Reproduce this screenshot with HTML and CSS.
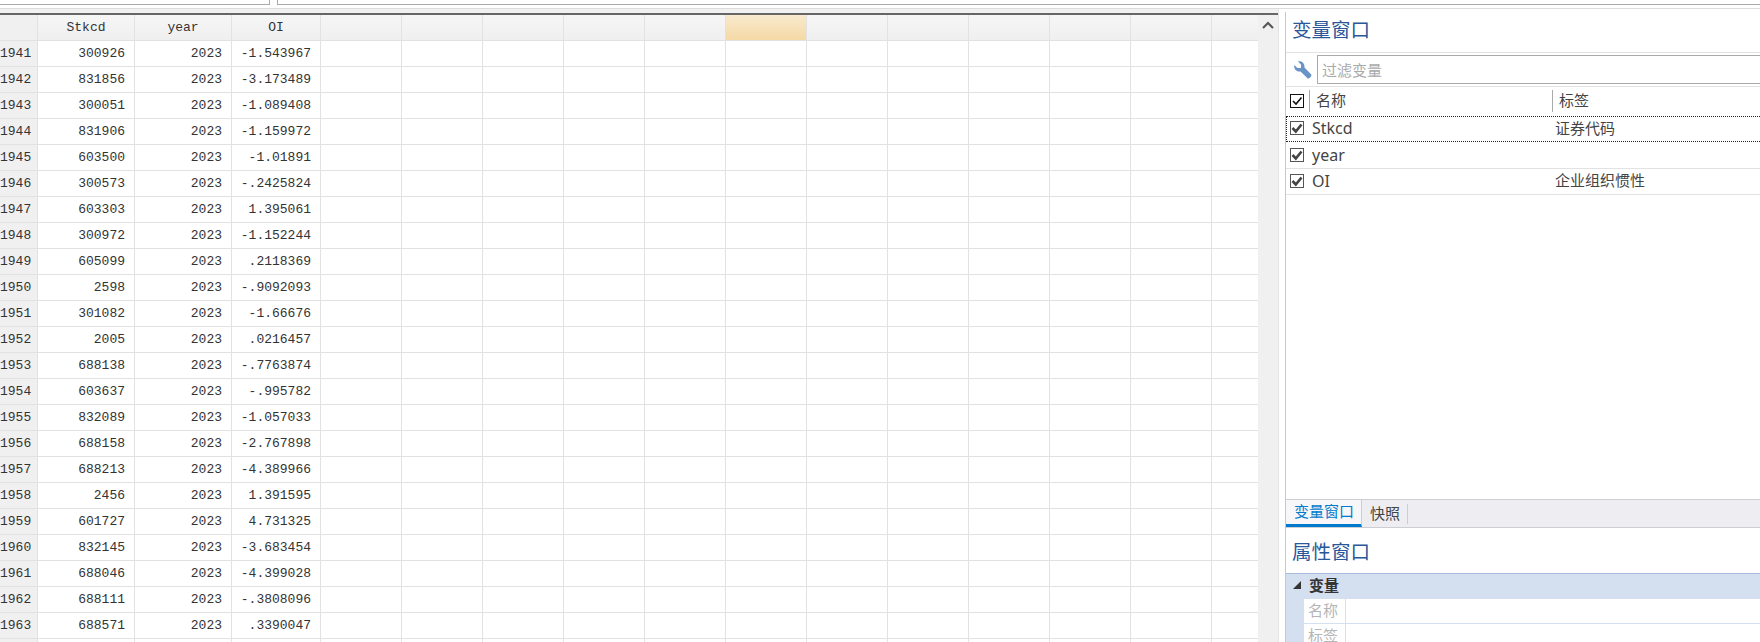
FILE: index.html
```html
<!DOCTYPE html>
<html lang="zh-CN">
<head>
    <meta charset="UTF-8">
    <title>数据编辑器</title>
    <link rel="stylesheet" href="styles.css">
</head>
<body>
    <!-- command strip above the grid -->
    <div class="topbar">
        <div class="box box-left"></div>
        <div class="box box-right"></div>
    </div>

    <div class="main">
        <div class="data-pane">
            <div class="grid-wrap">
                <div class="row head-row">
                    <div class="cell num"></div>
                    <div class="cell stkcd">Stkcd</div>
                    <div class="cell year">year</div>
                    <div class="cell oi">OI</div>
                    <div class="cell blank"></div>
                    <div class="cell blank"></div>
                    <div class="cell blank"></div>
                    <div class="cell blank"></div>
                    <div class="cell blank"></div>
                    <div class="cell blank hot"></div>
                    <div class="cell blank"></div>
                    <div class="cell blank"></div>
                    <div class="cell blank"></div>
                    <div class="cell blank"></div>
                    <div class="cell blank"></div>
                    <div class="cell blank"></div>
                </div>
                <div class="row"><div class="cell num">1941</div><div class="cell stkcd">300926</div><div class="cell year">2023</div><div class="cell oi">-1.543967</div><div class="rest"></div></div>
                <div class="row"><div class="cell num">1942</div><div class="cell stkcd">831856</div><div class="cell year">2023</div><div class="cell oi">-3.173489</div><div class="rest"></div></div>
                <div class="row"><div class="cell num">1943</div><div class="cell stkcd">300051</div><div class="cell year">2023</div><div class="cell oi">-1.089408</div><div class="rest"></div></div>
                <div class="row"><div class="cell num">1944</div><div class="cell stkcd">831906</div><div class="cell year">2023</div><div class="cell oi">-1.159972</div><div class="rest"></div></div>
                <div class="row"><div class="cell num">1945</div><div class="cell stkcd">603500</div><div class="cell year">2023</div><div class="cell oi">-1.01891</div><div class="rest"></div></div>
                <div class="row"><div class="cell num">1946</div><div class="cell stkcd">300573</div><div class="cell year">2023</div><div class="cell oi">-.2425824</div><div class="rest"></div></div>
                <div class="row"><div class="cell num">1947</div><div class="cell stkcd">603303</div><div class="cell year">2023</div><div class="cell oi">1.395061</div><div class="rest"></div></div>
                <div class="row"><div class="cell num">1948</div><div class="cell stkcd">300972</div><div class="cell year">2023</div><div class="cell oi">-1.152244</div><div class="rest"></div></div>
                <div class="row"><div class="cell num">1949</div><div class="cell stkcd">605099</div><div class="cell year">2023</div><div class="cell oi">.2118369</div><div class="rest"></div></div>
                <div class="row"><div class="cell num">1950</div><div class="cell stkcd">2598</div><div class="cell year">2023</div><div class="cell oi">-.9092093</div><div class="rest"></div></div>
                <div class="row"><div class="cell num">1951</div><div class="cell stkcd">301082</div><div class="cell year">2023</div><div class="cell oi">-1.66676</div><div class="rest"></div></div>
                <div class="row"><div class="cell num">1952</div><div class="cell stkcd">2005</div><div class="cell year">2023</div><div class="cell oi">.0216457</div><div class="rest"></div></div>
                <div class="row"><div class="cell num">1953</div><div class="cell stkcd">688138</div><div class="cell year">2023</div><div class="cell oi">-.7763874</div><div class="rest"></div></div>
                <div class="row"><div class="cell num">1954</div><div class="cell stkcd">603637</div><div class="cell year">2023</div><div class="cell oi">-.995782</div><div class="rest"></div></div>
                <div class="row"><div class="cell num">1955</div><div class="cell stkcd">832089</div><div class="cell year">2023</div><div class="cell oi">-1.057033</div><div class="rest"></div></div>
                <div class="row"><div class="cell num">1956</div><div class="cell stkcd">688158</div><div class="cell year">2023</div><div class="cell oi">-2.767898</div><div class="rest"></div></div>
                <div class="row"><div class="cell num">1957</div><div class="cell stkcd">688213</div><div class="cell year">2023</div><div class="cell oi">-4.389966</div><div class="rest"></div></div>
                <div class="row"><div class="cell num">1958</div><div class="cell stkcd">2456</div><div class="cell year">2023</div><div class="cell oi">1.391595</div><div class="rest"></div></div>
                <div class="row"><div class="cell num">1959</div><div class="cell stkcd">601727</div><div class="cell year">2023</div><div class="cell oi">4.731325</div><div class="rest"></div></div>
                <div class="row"><div class="cell num">1960</div><div class="cell stkcd">832145</div><div class="cell year">2023</div><div class="cell oi">-3.683454</div><div class="rest"></div></div>
                <div class="row"><div class="cell num">1961</div><div class="cell stkcd">688046</div><div class="cell year">2023</div><div class="cell oi">-4.399028</div><div class="rest"></div></div>
                <div class="row"><div class="cell num">1962</div><div class="cell stkcd">688111</div><div class="cell year">2023</div><div class="cell oi">-.3808096</div><div class="rest"></div></div>
                <div class="row"><div class="cell num">1963</div><div class="cell stkcd">688571</div><div class="cell year">2023</div><div class="cell oi">.3390047</div><div class="rest"></div></div>
                <div class="row"><div class="cell num"></div><div class="cell stkcd"></div><div class="cell year"></div><div class="cell oi"></div><div class="rest"></div></div>
            </div>
            <div class="scrollbar">
                <svg class="chevron" width="12" height="8" viewBox="0 0 12 8"><path d="M1 7 L6 2 L11 7" fill="none" stroke="#555" stroke-width="2"/></svg>
            </div>
        </div>

        <div class="side">
            <div class="side-title">变量窗口</div>

            <div class="filter-row">
                <svg class="wrench" width="18" height="18" viewBox="0 0 18 18"><path d="M4 0.4 L7 3.4 L7 7 L3.4 7 L0.3 4 C-0.3 7 1.5 10.8 6.5 10.5 L13.5 17.2 C15 18.3 18.3 15 17.2 13.5 L10.5 6.5 C10.8 1.5 7 -0.3 4 0.4 Z" fill="#6a94c6"/></svg>
                <input class="filter-input" type="text" placeholder="过滤变量">
            </div>

            <div class="var-head">
                <span class="check check-head"><svg width="12" height="12" viewBox="0 0 12 12"><path d="M2 6 L5 9 L10.5 2.5" fill="none" stroke="#111" stroke-width="1.6"/></svg></span>
                <span class="var-title name-title">名称</span>
                <span class="var-title">标签</span>
            </div>

            <div class="var-row focused">
                <span class="check"><svg width="12" height="12" viewBox="0 0 12 12"><path d="M1.5 6 L4.8 9.5 L10.5 2.5" fill="none" stroke="#444" stroke-width="2.6"/></svg></span>
                <span class="var-name">Stkcd</span>
                <span class="var-label">证券代码</span>
            </div>
            <div class="var-row">
                <span class="check"><svg width="12" height="12" viewBox="0 0 12 12"><path d="M1.5 6 L4.8 9.5 L10.5 2.5" fill="none" stroke="#444" stroke-width="2.6"/></svg></span>
                <span class="var-name">year</span>
                <span class="var-label"></span>
            </div>
            <div class="var-row">
                <span class="check"><svg width="12" height="12" viewBox="0 0 12 12"><path d="M1.5 6 L4.8 9.5 L10.5 2.5" fill="none" stroke="#444" stroke-width="2.6"/></svg></span>
                <span class="var-name">OI</span>
                <span class="var-label">企业组织惯性</span>
            </div>

            <div class="list-space"></div>

            <div class="tabs">
                <div class="tab active">变量窗口</div>
                <div class="tab">快照</div>
            </div>

            <div class="side-title props-title">属性窗口</div>

            <div class="props">
                <div class="group-head">
                    <svg class="tri" width="8" height="8" viewBox="0 0 8 8"><path d="M8 0 L8 8 L0 8 Z" fill="#333"/></svg>
                    <span>变量</span>
                </div>
                <div class="prop-row"><div class="prop-key">名称</div><div class="prop-val"></div></div>
                <div class="prop-row"><div class="prop-key">标签</div><div class="prop-val"></div></div>
            </div>
        </div>
    </div>
</body>
</html>
```

FILE: styles.css
```css
/* Data editor layout */
html, body {
    margin: 0;
    height: 642px;
    overflow: hidden;
    background: #fff;
}

body {
    display: flex;
    flex-direction: column;
    font-family: "Noto Sans", "Noto Sans CJK SC", sans-serif;
    color: #444;
}

.topbar {
    flex: none;
    height: 8px;
    display: flex;
    gap: 7px;
    border-bottom: 1px solid #dcdcdc;
}

.box {
    height: 4px;
    background: #fff;
    border: 1px solid #aaa;
    border-top: none;
}

.box-left {
    width: 270px;
    margin-left: -2px;
}

.box-right {
    flex: 1;
    margin-right: -2px;
}

.main {
    flex: 1;
    display: flex;
    min-height: 0;
}

/* grid */
.data-pane {
    flex: none;
    width: 1279px;
    display: flex;
    padding-top: 4px;
    background: #f1f1f1;
    border-right: 1px solid #e4e4e4;
    box-sizing: border-box;
}

.grid-wrap {
    flex: none;
    width: 1258px;
    border-top: 2px solid #666;
    overflow: hidden;
    background: #fff;
}

.row {
    display: flex;
    height: 26px;
    font-family: "Liberation Mono", monospace;
    font-size: 13px;
    line-height: 25px;
    color: #333;
    white-space: nowrap;
}

.cell {
    flex: none;
    box-sizing: border-box;
    height: 26px;
    padding-right: 9px;
    text-align: right;
    border-right: 1px solid #e2e2e2;
    border-bottom: 1px solid #e2e2e2;
}

.num {
    width: 38px;
    background: #f0f0f0;
}

.stkcd, .year {
    width: 97px;
}

.oi {
    width: 89px;
}

.blank {
    width: 81px;
}

.rest {
    flex: 1;
    height: 26px;
    box-sizing: border-box;
    border-bottom: 1px solid #e2e2e2;
    background: repeating-linear-gradient(to right, #fff 0 80px, #e2e2e2 80px 81px);
}

.head-row .cell {
    padding-right: 0;
    text-align: center;
    background: linear-gradient(#f6f6f6, #efefef);
}

.head-row .num {
    background: #f0f0f0;
}

.head-row .hot {
    background: linear-gradient(#f8e9cd, #f5d9a6);
}

.scrollbar {
    flex: 1;
    display: flex;
    justify-content: center;
    align-items: flex-start;
    padding-top: 6px;
    border-top: 2px solid #666;
    background: #f0f0f0;
}

/* right hand panel */
.side {
    flex: none;
    width: 481px;
    margin-left: 6px;
    margin-top: 3px;
    border-left: 1px solid #c8c8c8;
    display: flex;
    flex-direction: column;
    box-sizing: border-box;
    overflow: hidden;
}

.side-title {
    flex: none;
    height: 41px;
    box-sizing: border-box;
    padding: 3px 0 0 6px;
    font-size: 19.5px;
    line-height: 30px;
    color: #2b579a;
    border-bottom: 1px solid #e2e2e2;
}

.filter-row {
    flex: none;
    height: 34px;
    box-sizing: border-box;
    display: flex;
    align-items: center;
    gap: 5px;
    padding-left: 8px;
    border-bottom: 1px solid #e2e2e2;
}

.filter-input {
    flex: 1;
    height: 29px;
    box-sizing: border-box;
    padding: 0 4px;
    border: 1px solid #aaa;
    font-family: inherit;
    font-size: 15px;
    outline: none;
}

.filter-input::placeholder {
    color: #aaa;
}

.var-head {
    flex: none;
    height: 29px;
    box-sizing: border-box;
    display: flex;
    align-items: center;
    padding-left: 4px;
    padding-bottom: 2px;
    font-size: 15px;
}

.var-title {
    height: 22px;
    line-height: 21px;
    padding-left: 6px;
    border-left: 1px solid #aaa;
}

.name-title {
    width: 236px;
    margin-left: 5px;
}

.check {
    flex: none;
    width: 14px;
    height: 14px;
    box-sizing: border-box;
    display: flex;
    align-items: center;
    justify-content: center;
    border: 1px solid #555;
    background: #fff;
}

.check-head {
    border-color: #111;
}

.var-row {
    flex: none;
    height: 26px;
    box-sizing: border-box;
    display: flex;
    align-items: center;
    padding-left: 4px;
    padding-bottom: 2px;
    font-size: 15px;
    border-bottom: 1px solid #e2e2e2;
}

.var-row.focused {
    margin-bottom: 1px;
    border: 1px dotted #222;
    padding-left: 3px;
}

.var-name {
    width: 243px;
    margin-left: 8px;
    font-size: 16px;
}

.var-label {
    padding-bottom: 2px;
}

.list-space {
    flex: 1;
    min-height: 0;
}

.tabs {
    flex: none;
    height: 29px;
    box-sizing: border-box;
    display: flex;
    align-items: flex-start;
    background: #eeeef2;
    border-top: 1px solid #ccced4;
    border-bottom: 1px solid #ccced4;
    font-size: 15px;
}

.tab {
    height: 20px;
    margin-top: 4px;
    line-height: 18px;
    padding: 0 7px 0 8px;
    border-right: 1px solid #ccced4;
}

.tab.active {
    height: 27px;
    margin-top: 0;
    box-sizing: border-box;
    line-height: 22px;
    padding: 0 7px 0 8px;
    color: #007acc;
    background: #f7f7f9;
    border-bottom: 3px solid #007acc;
}

.props-title {
    height: 45px;
    padding-top: 9px;
    border-bottom: none;
}

.props {
    flex: none;
    height: 69px;
    overflow: hidden;
    box-sizing: border-box;
    border-top: 1px solid #a9bcdc;
    border-left: 1px solid #a9bcdc;
    margin-left: -1px;
    background: #d4dff0;
    font-size: 15px;
}

.group-head {
    height: 25px;
    box-sizing: border-box;
    display: flex;
    align-items: center;
    gap: 8px;
    padding-left: 7px;
    padding-bottom: 4px;
    font-weight: 700;
    color: #333;
}

.prop-row {
    height: 25px;
    margin-left: 18px;
    box-sizing: border-box;
    display: flex;
    background: #fff;
    border-bottom: 1px solid #d4dff0;
}

.prop-key {
    width: 42px;
    box-sizing: border-box;
    padding-left: 4px;
    line-height: 22px;
    color: #b5b5b5;
    border-right: 1px solid #d4dff0;
}

.prop-val {
    flex: 1;
}
```
